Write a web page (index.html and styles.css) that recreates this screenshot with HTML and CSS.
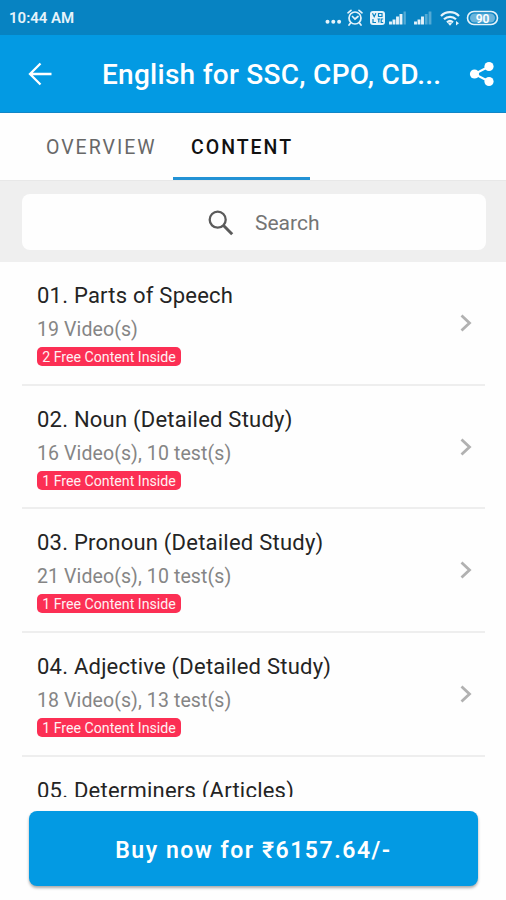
FILE: index.html
```html
<!DOCTYPE html>
<html lang="en">
<head>
<meta charset="utf-8">
<title>English for SSC, CPO, CDS</title>
<link rel="stylesheet" href="styles.css">
</head>
<body>
<div class="screen">
  <div class="status">
    <span class="time">10:44 AM</span>
    <svg class="status-icons" width="176" height="24" viewBox="0 0 176 24" fill="none" stroke="#e6f3fa">
      <g fill="#e6f3fa" stroke="none"><circle cx="3.5" cy="15.8" r="2"/><circle cx="9.3" cy="15.8" r="2"/><circle cx="15.1" cy="15.8" r="2"/></g>
      <g stroke-width="1.7" stroke-linecap="round"><circle cx="31" cy="12" r="6"/><path d="M24 6.8 27 4.4M38 6.8 35 4.4M26.5 17l-1.5 2M35.500 17l1.5 2M28.500 10.500l2.500 2.500 3-2.500"/></g>
      <rect x="46" y="5" width="15" height="14" rx="3" fill="#e6f3fa" stroke="none"/>
      <path d="M48.500 7.200l1.700 3.500 1.700-3.500M54.500 7.500h3.500v3h-3.500zM49 13v3.500h3M53.500 13h2.500M54.800 13v3.500M59.200 13h-2v3.500h2" stroke="#0783c2" stroke-width="1.200"/>
      <path d="M66.500 18.500v-3M70 18.500v-5M73.500 18.500v-8M77 18.500v-10.500" stroke-width="2.900"/><path d="M80.700 18.500V5.500" stroke-width="2.300" opacity=".35"/>
      <path d="M91.500 18.500v-3M95 18.500v-5M98.500 18.500v-8" stroke-width="2.900"/><path d="M102.200 18.500v-10.500M106 18.500V5.500" stroke-width="2.800" opacity=".35"/>
      <g stroke-width="2.200"><path d="M117 10a12.500 12.500 0 0 1 18 0M120 13.300a8.500 8.500 0 0 1 12 0M123 16.300a4.600 4.600 0 0 1 6 0"/></g>
      <path d="M126 19.800l-2-2.300a3 3 0 0 1 4 0zM132 15l3 2.300-3 2.300z" fill="#e6f3fa" stroke="none"/>
      <rect x="143.500" y="5.500" width="30" height="13" rx="6.500" stroke-width="1.600"/>
      <rect x="146" y="7.500" width="25" height="9" rx="4.500" fill="#6ab5dc" stroke="none"/>
      <text class="battery" x="158.500" y="16.500" text-anchor="middle">90</text>
    </svg>
  </div>
  <header class="appbar">
    <svg class="back" width="24" height="24" viewBox="0 0 24 24" fill="none" stroke="#fff" stroke-width="2.300"><path d="M23.500 12H2.500M12.500 1.500 2 12l10.500 10.500"/></svg>
    <h1>English for SSC, CPO, CD...</h1>
    <svg class="share" width="26" height="26" viewBox="0 0 26 26"><path d="M20 5.500 5.500 13 20 20.500" fill="none" stroke="#fff" stroke-width="2"/><g fill="#fff"><circle cx="20" cy="5.500" r="4.600"/><circle cx="5.500" cy="13" r="4.600"/><circle cx="20" cy="20.500" r="4.600"/></g></svg>
  </header>
  <nav class="tabs">
    <span class="tab">OVERVIEW</span>
    <span class="tab active">CONTENT</span>
  </nav>
  <div class="search-area">
    <div class="search">
      <svg width="26" height="26" viewBox="0 0 26 26" fill="none" stroke="#5b5b5b"><circle cx="9.700" cy="9.700" r="8" stroke-width="2.300"/><path d="M15.500 15.500l8.700 8.700" stroke-width="3"/></svg>
      <span>Search</span>
    </div>
  </div>
  <main class="list">
    <div class="item">
      <div><div class="name">01. Parts of Speech</div><div class="meta">19 Video(s)</div><div class="badge">2 Free Content Inside</div></div>
      <svg class="chevron" width="12" height="18" viewBox="0 0 12 18"><path d="M1.500 1.500 9.500 9l-8 7.500"/></svg>
    </div>
    <div class="item">
      <div><div class="name">02. Noun (Detailed Study)</div><div class="meta">16 Video(s), 10 test(s)</div><div class="badge">1 Free Content Inside</div></div>
      <svg class="chevron" width="12" height="18" viewBox="0 0 12 18"><path d="M1.500 1.500 9.500 9l-8 7.500"/></svg>
    </div>
    <div class="item">
      <div><div class="name">03. Pronoun (Detailed Study)</div><div class="meta">21 Video(s), 10 test(s)</div><div class="badge">1 Free Content Inside</div></div>
      <svg class="chevron" width="12" height="18" viewBox="0 0 12 18"><path d="M1.500 1.500 9.500 9l-8 7.500"/></svg>
    </div>
    <div class="item">
      <div><div class="name">04. Adjective (Detailed Study)</div><div class="meta">18 Video(s), 13 test(s)</div><div class="badge">1 Free Content Inside</div></div>
      <svg class="chevron" width="12" height="18" viewBox="0 0 12 18"><path d="M1.500 1.500 9.500 9l-8 7.500"/></svg>
    </div>
    <div class="item">
      <div><div class="name">05. Determiners (Articles)</div></div>
    </div>
  </main>
  <footer class="footer"><button class="buy">Buy now for ₹6157.64/-</button></footer>
</div>
</body>
</html>
```

FILE: styles.css
```css
* { box-sizing: border-box; }
body { margin: 0; background: #fefefe; font-family: Roboto, "Liberation Sans", sans-serif; }
.screen { width: 506px; height: 900px; display: flex; flex-direction: column; overflow: hidden; white-space: nowrap; }
.status { flex: none; height: 35px; background: #0783c2; display: flex; align-items: center; justify-content: space-between; padding: 0 6px 0 9px; }
.time { color: #e6f3fa; font-size: 15px; font-weight: 600; line-height: 20px; padding-top: 1px; }
.status-icons { display: block; width: 176px; }
.battery { fill: #fff; stroke: none; font-size: 12px; font-weight: 600; }
.appbar { flex: none; height: 78px; background: #039ae3; border-bottom: 1px solid #1186c7; display: flex; align-items: center; padding: 0 11px 0 28px; color: #fff; }
.back { flex: none; }
h1 { margin: 2px auto 0 50px; font-size: 28px; font-weight: 500; line-height: 34px; letter-spacing: .27px; }
.share { flex: none; }
.tabs { flex: none; height: 68px; display: flex; padding-left: 30px; border-bottom: 1px solid #e8e8e8; }
.tab { width: 143px; display: flex; align-items: center; padding: 2px 0 0 16px; font-size: 19.5px; letter-spacing: 2px; color: #686868; }
.active { width: 137px; color: #111; font-weight: 500; padding: 5px 0 0 18px; border-bottom: 3px solid #2392d5; }
.search-area { flex: none; height: 81px; padding: 13px 20px 12px 22px; background: #efefef; }
.search { height: 56px; display: flex; align-items: center; padding: 2px 0 0 186px; gap: 21px; border-radius: 8px; background: #fefefe; font-size: 21px; color: #747474; }
.list { flex: none; height: 535px; overflow: hidden; padding: 0 21px 0 22px; }
.item { height: 123.7px; display: flex; justify-content: space-between; padding: 20px 13px 0 15px; border-bottom: 2px solid #eeeeee; }
.item:first-child { height: 123.5px; }
.name { font-size: 22px; line-height: 28px; color: #242424; letter-spacing: .23px; }
.meta { margin-top: 8px; font-size: 19.5px; line-height: 24px; color: #858585; letter-spacing: .1px; }
.badge { width: 144px; height: 19px; margin-top: 5px; border-radius: 5px; background: #fc2f54; color: #fff0f2; font-size: 14.2px; line-height: 20px; text-align: center; }
.chevron { margin-top: 32px; fill: none; stroke: #b1b1b1; stroke-width: 2.8px; }
.footer { flex: none; height: 103px; padding: 14px 28px 14px 29px; }
.buy { display: block; width: 100%; height: 75px; border: 0; padding: 3px 0 0; border-radius: 8px; background: #039ae3; box-shadow: 0 2px 3px #0005; color: #fff; font-family: Roboto, "Noto Sans", sans-serif; font-size: 23px; font-weight: 600; letter-spacing: 1.53px; }
```
